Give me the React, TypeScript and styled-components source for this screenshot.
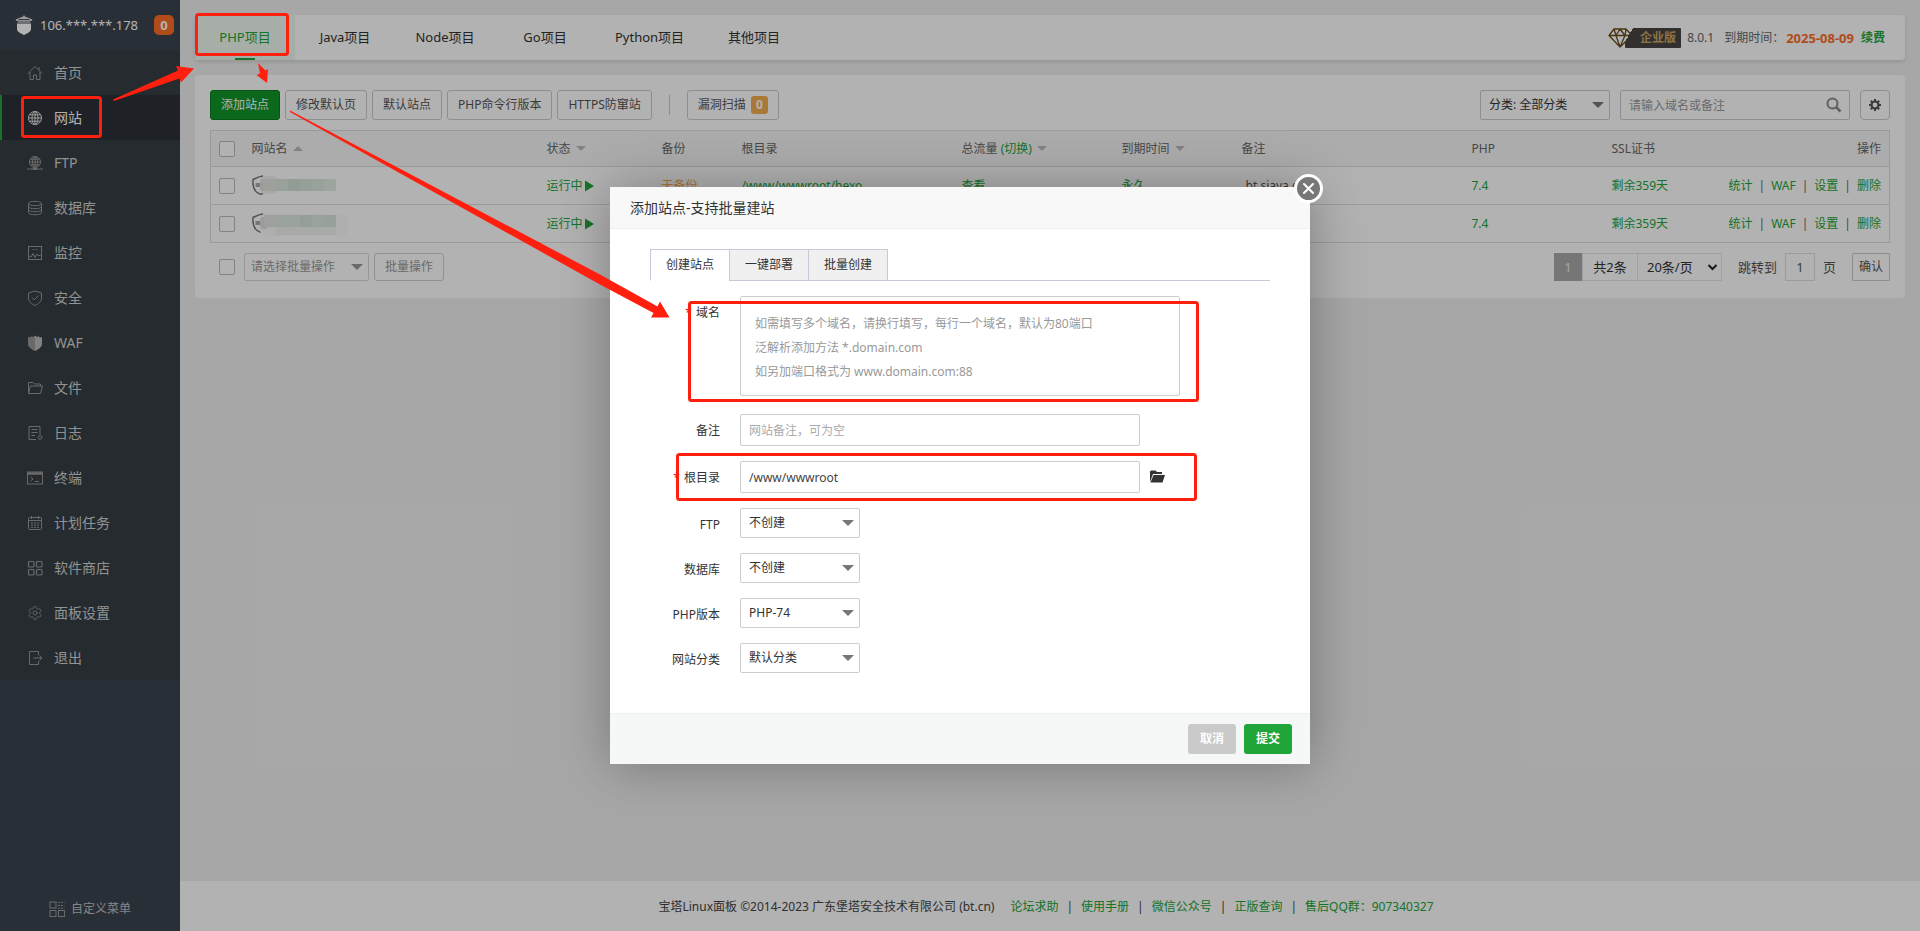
import React from "react";
import styled, { createGlobalStyle, css } from "styled-components";
import { Settings } from "lucide-react";

const GREEN = "#20a53a";

const Global = createGlobalStyle`
  *, *::before, *::after { box-sizing: border-box; }
  body {
    margin: 0;
    background: #f0f0f0;
    color: #333;
    font: 12px/18px "Noto Sans", "Noto Sans CJK SC", sans-serif;
  }
  button, input, select, textarea { font: inherit; color: inherit; margin: 0; }
  h1, h2, p { margin: 0; font: inherit; }
  a { color: ${GREEN}; text-decoration: none; }
`;

/* ---------- page frame ---------- */

const Page = styled.div`
  position: relative;
  display: flex;
  min-height: 100vh;
`;

const Sidebar = styled.aside`
  flex: none;
  display: flex;
  flex-direction: column;
  width: 180px;
  background: #3c444f;
`;

const ServerBar = styled.div`
  display: flex;
  align-items: center;
  height: 50px;
  padding: 0 6px 0 15px;
  color: #fff;
  font-size: 13px;
`;

const ServerName = styled.span`
  flex: 1;
  padding-left: 7px;
`;

const CountBadge = styled.span`
  display: grid;
  place-items: center;
  width: 20px;
  height: 20px;
  border-radius: 5px;
  background: #fc6d26;
  font-weight: 700;
`;

const Menu = styled.nav`
  display: flex;
  flex-direction: column;
  background: #363e42;
`;

const MenuLink = styled.a<{ $active?: boolean }>`
  display: flex;
  align-items: center;
  gap: 11px;
  height: 45px;
  padding-left: 25px;
  border-left: 2px solid ${(p) => (p.$active ? GREEN : "#3c3f41")};
  background: ${(p) => (p.$active ? "#2b3036" : "transparent")};
  color: ${(p) => (p.$active ? "#fff" : "#d2d2d2")};
  font-size: 14px;
  svg { color: ${(p) => (p.$active ? "#e4e4e4" : "#999")}; }
`;

const CustomMenu = styled.a`
  display: flex;
  align-items: center;
  justify-content: center;
  gap: 6px;
  margin-top: auto;
  height: 44px;
  color: #c0c0c0;
  svg { color: #999; }
`;

const Main = styled.div`
  flex: 1;
  min-width: 0;
  display: flex;
  flex-direction: column;
`;

const Content = styled.main`
  flex: 1;
  display: flex;
  flex-direction: column;
  gap: 15px;
  padding: 15px;
`;

const TopBar = styled.div`
  display: flex;
  align-items: center;
  justify-content: space-between;
  height: 45px;
  padding-right: 20px;
  border-radius: 4px;
  background: #fff;
  box-shadow: 0 2px 4px rgba(0, 0, 0, 0.12);
`;

const ProjectTabs = styled.nav`
  display: flex;
`;

const ProjectTab = styled.a<{ $active?: boolean }>`
  position: relative;
  display: flex;
  align-items: center;
  justify-content: center;
  min-width: 100px;
  height: 45px;
  padding: 0 20px 2px;
  font-size: 13px;
  color: ${(p) => (p.$active ? GREEN : "#333")};
  ${(p) =>
    p.$active &&
    css`
      background: #eff9f1;
      &::after {
        content: "";
        position: absolute;
        left: 40px;
        bottom: 0;
        width: 20px;
        height: 2px;
        background: ${GREEN};
      }
    `}
`;

const License = styled.div`
  display: flex;
  align-items: center;
  color: #666;
`;

const EditionTag = styled.span`
  display: flex;
  align-items: center;
  margin-right: 6px;
`;

const EditionName = styled.b`
  height: 20px;
  margin-left: -10px;
  padding: 0 5px 0 15px;
  border-radius: 1px;
  background: linear-gradient(120deg, transparent 7px, #484642 7px);
  color: #c9a566;
  line-height: 20px;
`;

const Expiry = styled.span`
  margin-left: 10px;
`;

const ExpiryDate = styled.b`
  margin: 0 7px 0 2px;
  color: #fc6d26;
  font-size: 13px;
`;

const Card = styled.section`
  padding: 15px 15px 17px;
  border-radius: 4px;
  background: #fff;
`;

const Toolbar = styled.div`
  display: flex;
  align-items: center;
  gap: 5px;
  margin-bottom: 10px;
`;

const ToolButton = styled.button<{ $primary?: boolean }>`
  display: flex;
  align-items: center;
  gap: 5px;
  height: 30px;
  padding: 0 10px;
  border: 1px solid ${(p) => (p.$primary ? "#0b7a20" : "#ccc")};
  border-radius: 3px;
  background: ${(p) => (p.$primary ? "#10952a" : "#fff")};
  color: ${(p) => (p.$primary ? "#fff" : "#555")};
`;

const ScanBadge = styled.span`
  display: grid;
  place-items: center;
  width: 17px;
  height: 18px;
  border-radius: 3px;
  background: #f5ae4f;
  color: #fff;
  font-weight: 700;
`;

const Divider = styled.span`
  width: 1px;
  height: 20px;
  margin: 0 12px;
  background: #ccc;
`;

const Filters = styled.div`
  display: flex;
  gap: 10px;
  margin-left: auto;
`;

const SearchBox = styled.div`
  position: relative;
  svg { position: absolute; right: 8px; top: 7px; color: #8a8a8a; }
`;

const SearchInput = styled.input`
  width: 230px;
  height: 30px;
  padding: 0 30px 0 8px;
  border: 1px solid #ccc;
  border-radius: 2px;
  background: #fff;
  &::placeholder { color: #999; }
`;

const IconButton = styled.button`
  display: grid;
  place-items: center;
  width: 30px;
  height: 30px;
  padding: 0;
  border: 1px solid #ccc;
  border-radius: 4px;
  background: #fff;
  color: #555;
`;

/* ---------- select with a drawn caret ---------- */

const SelectWrap = styled.span<{ $width: number }>`
  position: relative;
  display: inline-flex;
  width: ${(p) => p.$width}px;
`;

const SelectBox = styled.select<{ $height?: number; $muted?: boolean }>`
  appearance: none;
  width: 100%;
  height: ${(p) => p.$height ?? 30}px;
  padding: 0 20px 0 ${(p) => (p.$muted ? 6 : 8)}px;
  border: 1px solid ${(p) => (p.$muted ? "#d8d8d8" : "#ccc")};
  border-radius: 2px;
  background: #fff;
  color: ${(p) => (p.$muted ? "#999" : "#333")};
`;

const Caret = styled.span<{ $muted?: boolean }>`
  position: absolute;
  right: 6px;
  top: 50%;
  margin-top: -3px;
  border: 6px solid transparent;
  border-top-color: ${(p) => (p.$muted ? "#999" : "#777")};
  border-bottom-width: 0;
  pointer-events: none;
`;

type PickProps = {
  label: string;
  text: string;
  width: number;
  height?: number;
  muted?: boolean;
  id?: string;
};

const Pick = ({ label, text, width, height, muted, id }: PickProps) => (
  <SelectWrap $width={width}>
    <SelectBox id={id} aria-label={label} $height={height} $muted={muted}>
      <option>{text}</option>
    </SelectBox>
    <Caret $muted={muted} />
  </SelectWrap>
);

/* ---------- site table ---------- */

const Table = styled.table`
  width: 100%;
  table-layout: fixed;
  border-collapse: collapse;
  border: 1px solid #ddd;
  th, td {
    height: 38px;
    padding: 0 8px;
    border-bottom: 1px solid #ddd;
    text-align: left;
    font-weight: 400;
    white-space: nowrap;
  }
  th { height: 36px; background: #f6f6f6; color: #666; }
  th:last-child, td:last-child { text-align: right; }
`;

const Col = styled.col<{ $w?: number }>`
  width: ${(p) => (p.$w ? `${p.$w}px` : "auto")};
`;

const Check = styled.input`
  appearance: none;
  display: block;
  width: 16px;
  height: 16px;
  border: 1px solid #bbb;
  border-radius: 2px;
  background: #fff;
`;

const Sort = styled.span<{ $up?: boolean }>`
  display: inline-block;
  margin-left: 5px;
  vertical-align: 2px;
  border: 5px solid transparent;
  ${(p) =>
    p.$up
      ? css`border-top-width: 0; border-bottom-color: #bbb;`
      : css`border-bottom-width: 0; border-top-color: #bbb;`}
`;

const SiteName = styled.span`
  display: flex;
  align-items: center;
`;

const Running = styled.a`
  display: flex;
  align-items: center;
  gap: 2px;
`;

const NoBackup = styled.a`
  color: #f5a84a;
`;

const Note = styled.span`
  padding-left: 4px;
  color: #555;
`;

const Actions = styled.span`
  display: flex;
  justify-content: flex-end;
  gap: 6px;
  color: #666;
`;

const TableFoot = styled.div`
  display: flex;
  align-items: center;
  gap: 5px;
  margin-top: 10px;
  padding-left: 9px;
`;

const BatchPick = styled.span`
  display: flex;
  margin-left: 4px;
`;

const BatchButton = styled.button`
  height: 28px;
  padding: 0 10px;
  border: 1px solid #d0d0d0;
  border-radius: 3px;
  background: #fff;
  color: #999;
`;

const Pager = styled.div`
  display: flex;
  align-items: center;
  margin-left: auto;
  color: #555;
  font-size: 13px;
`;

const PageNow = styled.span`
  width: 28px;
  height: 28px;
  background: #aaa;
  color: #eee;
  line-height: 28px;
  text-align: center;
`;

const PageTotal = styled.span`
  width: 56px;
  height: 28px;
  border: 1px solid #e6e6e6;
  color: #333;
  line-height: 26px;
  text-align: center;
`;

const PageSize = styled.span`
  position: relative;
  display: flex;
  width: 85px;
  margin: 0 16px 0 -1px;
  svg { position: absolute; right: 4px; top: 9px; pointer-events: none; color: #222; }
`;

const PageSizeSelect = styled.select`
  appearance: none;
  width: 100%;
  height: 28px;
  padding: 0 16px 0 9px;
  border: 1px solid #e6e6e6;
  border-radius: 0;
  background: #fff;
  color: #333;
`;

const PageInput = styled.input`
  width: 30px;
  height: 28px;
  margin: 0 8px;
  padding: 0;
  border: 1px solid #e0e0e0;
  background: #fff;
  text-align: center;
`;

const ConfirmButton = styled.button`
  width: 38px;
  height: 28px;
  margin-left: 16px;
  padding: 0;
  border: 1px solid #ccc;
  border-radius: 1px;
  background: #fff;
  font-size: 12px;
`;

const Footer = styled.footer`
  display: flex;
  align-items: center;
  justify-content: center;
  height: 50px;
  padding: 2px 8px 0 0;
  background: #fff;
  color: #444;
`;

const FooterLinks = styled.span`
  display: flex;
  gap: 8px;
  margin-left: 16px;
`;

/* ---------- dialog ---------- */

const Shade = styled.div`
  position: absolute;
  inset: 0;
  display: flex;
  align-items: center;
  justify-content: center;
  padding-top: 20px;
  background: rgba(0, 0, 0, 0.3);
`;

const Dialog = styled.section`
  position: relative;
  width: 700px;
  background: #fff;
  box-shadow: 1px 1px 50px rgba(0, 0, 0, 0.3);
`;

const DialogHead = styled.h2`
  height: 42px;
  padding: 0 20px;
  border-bottom: 1px solid #eee;
  background: #f8f8f8;
  font-size: 14px;
  line-height: 41px;
`;

const CloseButton = styled.button`
  position: absolute;
  top: -13px;
  right: -13px;
  display: grid;
  place-items: center;
  width: 29px;
  height: 29px;
  padding: 0;
  border: 3px solid #fff;
  border-radius: 50%;
  background: #777;
  color: #fff;
`;

const DialogBody = styled.div`
  padding: 20px 40px;
`;

const FormTabs = styled.div`
  display: flex;
  height: 32px;
  margin-bottom: 15px;
  border-bottom: 1px solid #c8c8d8;
`;

const FormTab = styled.button<{ $active?: boolean }>`
  width: 80px;
  height: 32px;
  margin-right: -1px;
  padding: 0;
  border: 1px solid #c8c8d8;
  border-bottom-color: ${(p) => (p.$active ? "#fff" : "#c8c8d8")};
  background: ${(p) => (p.$active ? "#fff" : "#f0f0f0")};
`;

const Form = styled.form`
  display: flex;
  flex-direction: column;
  gap: 15px;
  padding-bottom: 20px;
`;

const Field = styled.div<{ $gap?: boolean }>`
  display: flex;
  align-items: flex-start;
  padding-bottom: ${(p) => (p.$gap ? 3 : 0)}px;
`;

const PickField = styled(Field)`
  height: 30px;
`;

const FieldLabel = styled.label`
  flex: none;
  width: 70px;
  margin-right: 20px;
  line-height: 34px;
  text-align: right;
`;

const Required = styled.span`
  margin-right: 4px;
  color: red;
`;

const TextInput = styled.input`
  width: 400px;
  height: 32px;
  padding: 0 8px;
  border: 1px solid #ccc;
  border-radius: 2px;
  color: #444;
  &::placeholder { color: #aaa; }
`;

const DomainInput = styled.textarea`
  width: 440px;
  height: 100px;
  padding: 15px 14px;
  border: 1px solid #ccc;
  border-radius: 2px;
  line-height: 24px;
  resize: none;
  overflow: hidden;
  &::placeholder { color: #999; }
`;

const FolderButton = styled.button`
  display: grid;
  place-items: center;
  height: 32px;
  margin-left: 9px;
  padding: 0;
  border: 0;
  background: none;
`;

const DialogFoot = styled.div`
  display: flex;
  align-items: center;
  justify-content: flex-end;
  gap: 8px;
  height: 51px;
  padding: 0 18px;
  border-top: 1px solid #edf0f0;
  background: #f6f8f8;
`;

const FootButton = styled.button<{ $primary?: boolean }>`
  width: 48px;
  height: 30px;
  padding: 0;
  border: 0;
  border-radius: 3px;
  background: ${(p) => (p.$primary ? GREEN : "#cacaca")};
  color: #fff;
  font-weight: 700;
`;

/* ---------- guide marks over the page ---------- */

const Marks = styled.svg`
  position: absolute;
  left: 0;
  top: 0;
  width: 100%;
  height: 100%;
  pointer-events: none;
`;

/* ---------- drawings ---------- */

const Icon = ({ children }: { children: React.ReactNode }) => (
  <svg width="16" height="16" viewBox="0 0 16 16" fill="none" stroke="currentColor" strokeWidth="1" aria-hidden="true">
    {children}
  </svg>
);

const drawings: Record<string, React.ReactNode> = {
  home: <path d="M1 8.5 8 1.500l7 7M3 7v7.500h3.500V10h3v4.500H13V7M12 2v3" />,
  site: (
    <>
      <circle cx="8" cy="8" r="6.500" />
      <ellipse cx="8" cy="8" rx="3" ry="6.500" />
      <path d="M8 1.500v13M1.500 8h13M2.400 4.800h11.200M2.400 11.200h11.200" />
    </>
  ),
  ftp: (
    <>
      <circle cx="8" cy="7" r="5.500" />
      <ellipse cx="8" cy="7" rx="2.500" ry="5.500" />
      <path d="M8 1.500v11M2.500 7h11M3.500 4.200h9M3.500 9.800h9M0 14h16" />
      <path d="M6 14h4" strokeWidth="2" />
    </>
  ),
  db: (
    <>
      <ellipse cx="8" cy="3.500" rx="6.500" ry="2.200" />
      <path d="M1.500 3.500v9c0 3 13 3 13 0v-9M1.500 6.500c0 3 13 3 13 0M1.500 9.500c0 3 13 3 13 0" />
    </>
  ),
  monitor: (
    <>
      <rect x="1.500" y="1.500" width="13" height="13" />
      <path d="M2.500 11.500h2l1.500-3 2 4 2-3.500 1 1.500h2.500" />
      <path d="M5 4.500h6" opacity="0.5" />
    </>
  ),
  safe: (
    <>
      <path d="M8 1 14.500 3v5c0 3.500-3 6-6.500 7.500C4.500 14 1.500 11.500 1.500 8V3z" />
      <path d="m5 7.500 2.300 2.300L11.500 5.500" />
    </>
  ),
  waf: (
    <g stroke="none" fill="currentColor">
      <path d="M8 0.500 6 2 4.500 1.300 3 2.500 1 2v7c0 3.500 4 5.500 7 7z" />
      <path d="M8 0.500 10 2l1.500-.7L13 2.500 15 2v7c0 3.500-4 5.500-7 7z" fill="#bbb" />
    </g>
  ),
  file: <path d="M1.500 13.500v-11H6L7.500 4h6v2M1.500 13.500 3.500 6h12l-2 7.500z" />,
  log: (
    <>
      <path d="M9 14.500H2v-13h11v8M4.500 4.500h6M4.500 7.500h6M4.500 10.500H8" />
      <circle cx="13" cy="12.500" r="1.800" />
    </>
  ),
  term: (
    <>
      <rect x="0.500" y="2" width="15" height="12" />
      <path d="M1 3.500h14" strokeWidth="2.500" />
      <path d="m3.500 7 2.500 2-2.500 2M8 11.500h4" />
    </>
  ),
  cron: (
    <>
      <rect x="1.500" y="2.500" width="13" height="12" rx="1" />
      <path d="M1.500 5.500h13M4.500 1v3M11.500 1v3" />
      <path d="M4 8h8M4 10.200h8M4 12.400h8" strokeDasharray="2 1" />
    </>
  ),
  store: (
    <g strokeWidth="1.200">
      <rect x="1.500" y="1.500" width="5.500" height="5.500" rx="1" />
      <rect x="9.500" y="1.500" width="5.500" height="5.500" rx="1" />
      <rect x="1.500" y="9.500" width="5.500" height="5.500" rx="1" />
      <rect x="9.500" y="9.500" width="5.500" height="5.500" rx="1" />
    </g>
  ),
  exit: <path d="M11.500 5V1.500h-9v13h9V11M6.500 8h8M12.500 5.500 15 8l-2.500 2.500" />,
  custom: (
    <>
      <rect x="1" y="1" width="6" height="6" />
      <rect x="1" y="9.500" width="6" height="6" />
      <rect x="9.500" y="9.500" width="6" height="6" />
      <path d="M9 1.500h6.500M9 4.500h6.500M9 7.200h6.500" strokeDasharray="2 1" />
    </>
  ),
};

const Logo = () => (
  <svg width="18" height="20" viewBox="0 0 18 20" fill="#ddd" aria-hidden="true">
    <path d="M9 0 10 1.500 17.500 4.500 16.500 6H1.500L.5 4.500 8 1.500z" />
    <path d="M3 6.500h12l1 1.500v6c0 3-4 4.500-7 6-3-1.500-7-3-7-6V8z" fill="#fff" />
    <path d="M2 8h14M3.500 4.600h11" stroke="#3c444f" strokeWidth="1" />
  </svg>
);

const Diamond = () => (
  <svg width="27" height="20" viewBox="0 0 27 20" fill="#fff" stroke="#6b4c1c" strokeWidth="1.300" strokeLinejoin="round" aria-hidden="true">
    <path d="M6 0h13l7 7.500L14 20h-2L0 7.500z" stroke="none" />
    <path d="M6 1h12l6 6.500L12 19 1 7.500zM1 7.500h23M6 1l2 6.500L12 19l5-11.500L18 1M8 7.500 12 1l5 6.500" fill="none" />
  </svg>
);

const SearchGlyph = () => (
  <svg width="16" height="16" viewBox="0 0 16 16" fill="none" stroke="currentColor" strokeWidth="2" aria-hidden="true">
    <circle cx="6.500" cy="6.500" r="5" />
    <path d="m10 10 4.500 4.500" strokeWidth="2.500" />
  </svg>
);

const Gear = () => (
  <svg width="14" height="14" viewBox="0 0 14 14" fill="none" stroke="currentColor" aria-hidden="true">
    <circle cx="7" cy="7" r="3.500" strokeWidth="2.200" />
    <path d="M7 1v2M7 11v2M1 7h2M11 7h2M2.800 2.800l1.400 1.400M9.800 9.800l1.400 1.400M2.800 11.200l1.400-1.400M9.800 4.200l1.400-1.400" strokeWidth="2" />
  </svg>
);

const Folder = () => (
  <svg width="17" height="14" viewBox="0 0 17 14" fill="#333" aria-hidden="true">
    <path d="M1 12V1.500L2 .5h4.500L8 2h5v2H4z" />
    <path d="M4.500 5H16l-2.500 7.500H1.500z" />
  </svg>
);

const mosaics = [
  ["#e2e5e0", "#dae8de", "#cfe0d5", "#d6e6dc", "#d8e8dd", "#e2ece4"],
  ["#e2e5e2", "#dce8e0", "#e0e8e0", "#d4e4da", "#dde8e0", "#d9e6dc"],
];

const MaskedSite = ({ row }: { row: number }) => (
  <svg width="96" height="26" viewBox="0 0 96 26" role="img" aria-label="站点">
    <path d="M11 3C8 3 4.500 5 1 6.500c-.5 6 0 12 7 14.500h3" fill="none" stroke="#777" strokeWidth="1.500" />
    <path d="M3.500 12h6" stroke="#aaa" strokeWidth="4" />
    <rect x="8" y="3" width={row ? 88 : 18} height={row ? 22 : 18} rx="6" fill={row ? "#fafbfa" : "#f0f1f0"} />
    <rect x="8" y="6" width="8" height="12" rx="3" fill="#e0e0e0" />
    {mosaics[row].map((c, i) => (
      <rect key={i} x={12 + i * 12} y={row ? 4 : 6} width="12" height="12" fill={c} />
    ))}
    {row === 1 && <rect x="24" y="16" width="60" height="8" fill="#f0f4f0" />}
  </svg>
);

/* ---------- data ---------- */

const menu = [
  ["home", "首页"],
  ["site", "网站"],
  ["ftp", "FTP"],
  ["db", "数据库"],
  ["monitor", "监控"],
  ["safe", "安全"],
  ["waf", "WAF"],
  ["file", "文件"],
  ["log", "日志"],
  ["term", "终端"],
  ["cron", "计划任务"],
  ["store", "软件商店"],
  ["setting", "面板设置"],
  ["exit", "退出"],
];

const projects = ["PHP项目", "Java项目", "Node项目", "Go项目", "Python项目", "其他项目"];
const tools = ["修改默认页", "默认站点", "PHP命令行版本", "HTTPS防窜站"];
const columns = [33, 295, 115, 80, 220, 160, 120, 230, 140, 140, 0];
const sites = [
  { root: "/www/wwwroot/hexo", note: "bt.sjava.cn" },
  { root: "/www/wwwroot/default", note: "" },
];
const actions = ["统计", "WAF", "设置", "删除"];
const links = ["论坛求助", "使用手册", "微信公众号", "正版查询", "售后QQ群：907340327"];

const picks = [
  { id: "ftp", label: "FTP", text: "不创建" },
  { id: "database", label: "数据库", text: "不创建" },
  { id: "php", label: "PHP版本", text: "PHP-74" },
  { id: "category", label: "网站分类", text: "默认分类" },
];

const joined = (items: string[]) =>
  items.map((t, i) => (
    <React.Fragment key={t}>
      {i > 0 && <span>|</span>}
      <a href="#">{t}</a>
    </React.Fragment>
  ));

/* ---------- sections ---------- */

const SideMenu = () => (
  <Sidebar>
    <ServerBar>
      <Logo />
      <ServerName>106.***.***.178</ServerName>
      <CountBadge>0</CountBadge>
    </ServerBar>
    <Menu>
      {menu.map(([key, text], i) => (
        <MenuLink key={key} href="#" $active={i === 1}>
          {key === "setting" ? <Settings size={16} strokeWidth={1.2} /> : <Icon>{drawings[key]}</Icon>}
          {text}
        </MenuLink>
      ))}
    </Menu>
    <CustomMenu href="#">
      <Icon>{drawings.custom}</Icon>
      自定义菜单
    </CustomMenu>
  </Sidebar>
);

const Header = () => (
  <TopBar>
    <ProjectTabs>
      {projects.map((p, i) => (
        <ProjectTab key={p} href="#" $active={i === 0}>{p}</ProjectTab>
      ))}
    </ProjectTabs>
    <License>
      <EditionTag>
        <Diamond />
        <EditionName>企业版</EditionName>
      </EditionTag>
      8.0.1
      <Expiry>到期时间：</Expiry>
      <ExpiryDate>2025-08-09</ExpiryDate>
      <a href="#"><b>续费</b></a>
    </License>
  </TopBar>
);

const SiteCard = () => (
  <Card>
    <Toolbar>
      <ToolButton $primary>添加站点</ToolButton>
      {tools.map((t) => <ToolButton key={t}>{t}</ToolButton>)}
      <Divider />
      <ToolButton>漏洞扫描<ScanBadge>0</ScanBadge></ToolButton>
      <Filters>
        <Pick label="分类" text="分类: 全部分类" width={130} />
        <SearchBox>
          <SearchInput aria-label="搜索" placeholder="请输入域名或备注" />
          <SearchGlyph />
        </SearchBox>
        <IconButton aria-label="设置"><Gear /></IconButton>
      </Filters>
    </Toolbar>
    <Table>
      <colgroup>{columns.map((w, i) => <Col key={i} $w={w} />)}</colgroup>
      <thead>
        <tr>
          <th><Check type="checkbox" aria-label="全选" /></th>
          <th>网站名<Sort $up /></th>
          <th>状态<Sort /></th>
          <th>备份</th>
          <th>根目录</th>
          <th>总流量 <a href="#">(切换)</a><Sort /></th>
          <th>到期时间<Sort /></th>
          <th>备注</th>
          <th>PHP</th>
          <th>SSL证书</th>
          <th>操作</th>
        </tr>
      </thead>
      <tbody>
        {sites.map((s, i) => (
          <tr key={s.root}>
            <td><Check type="checkbox" aria-label="选择站点" /></td>
            <td><SiteName><MaskedSite row={i} /></SiteName></td>
            <td>
              <Running href="#">
                运行中
                <svg width="9" height="12" viewBox="0 0 9 12" fill={GREEN} aria-hidden="true"><path d="M0 0.500 9 6 0 11.500z" /></svg>
              </Running>
            </td>
            <td><NoBackup href="#">无备份</NoBackup></td>
            <td><a href="#">{s.root}</a></td>
            <td><a href="#">查看</a></td>
            <td><a href="#">永久</a></td>
            <td><Note>{s.note}</Note></td>
            <td><a href="#">7.4</a></td>
            <td><a href="#">剩余359天</a></td>
            <td><Actions>{joined(actions)}</Actions></td>
          </tr>
        ))}
      </tbody>
    </Table>
    <TableFoot>
      <Check type="checkbox" aria-label="批量选择" />
      <BatchPick><Pick label="批量操作" text="请选择批量操作" width={125} height={28} muted /></BatchPick>
      <BatchButton>批量操作</BatchButton>
      <Pager>
        <PageNow>1</PageNow>
        <PageTotal>共2条</PageTotal>
        <PageSize>
          <PageSizeSelect aria-label="每页条数"><option>20条/页</option></PageSizeSelect>
          <svg width="11" height="10" viewBox="0 0 11 10" fill="none" stroke="currentColor" strokeWidth="2" aria-hidden="true"><path d="m1.500 3 4 4 4-4" /></svg>
        </PageSize>
        跳转到
        <PageInput aria-label="页码" defaultValue="1" />
        页
        <ConfirmButton>确认</ConfirmButton>
      </Pager>
    </TableFoot>
  </Card>
);

const AddSiteDialog = () => (
  <Dialog role="dialog" aria-labelledby="dialog-title">
    <DialogHead id="dialog-title">添加站点-支持批量建站</DialogHead>
    <CloseButton aria-label="关闭">
      <svg width="13" height="13" viewBox="0 0 13 13" stroke="currentColor" strokeWidth="2" strokeLinecap="round" aria-hidden="true"><path d="m2 2 9 9M11 2l-9 9" /></svg>
    </CloseButton>
    <DialogBody>
      <FormTabs>
        <FormTab $active>创建站点</FormTab>
        <FormTab>一键部署</FormTab>
        <FormTab>批量创建</FormTab>
      </FormTabs>
      <Form>
        <Field $gap>
          <FieldLabel htmlFor="domain"><Required>*</Required>域名</FieldLabel>
          <DomainInput
            id="domain"
            placeholder={"如需填写多个域名，请换行填写，每行一个域名，默认为80端口\n泛解析添加方法 *.domain.com\n如另加端口格式为 www.domain.com:88"}
          />
        </Field>
        <PlainField>
          <FieldLabel htmlFor="remark">备注</FieldLabel>
          <TextInput id="remark" placeholder="网站备注，可为空" />
        </PlainField>
        <PlainField>
          <FieldLabel htmlFor="root"><Required>*</Required>根目录</FieldLabel>
          <TextInput id="root" defaultValue="/www/wwwroot" />
          <FolderButton type="button" aria-label="选择目录"><Folder /></FolderButton>
        </PlainField>
        {picks.map((p) => (
          <PickField key={p.id}>
            <FieldLabel htmlFor={p.id}>{p.label}</FieldLabel>
            <Pick id={p.id} label={p.label} text={p.text} width={120} />
          </PickField>
        ))}
      </Form>
    </DialogBody>
    <DialogFoot>
      <FootButton>取消</FootButton>
      <FootButton $primary>提交</FootButton>
    </DialogFoot>
  </Dialog>
);

const PlainField = styled(Field)`
  height: 32px;
`;

const GuideMarks = () => (
  <Marks aria-hidden="true">
    <g fill="none" stroke="#ff1f0f" strokeWidth="3">
      <rect x="196.500" y="14.500" width="91" height="40" rx="2" />
      <rect x="22.500" y="97.500" width="78" height="39" rx="2" />
      <rect x="689.500" y="302.500" width="508" height="98" rx="2" />
      <rect x="677.500" y="454.500" width="518" height="45" rx="2" />
    </g>
    <g fill="#ff1f0f">
      <path d="M113 99.500 178 70.500 176 66 194 68.500 181 82.500 179.500 78.500 114 101z" />
      <path d="M258 63 265.500 70.500 268 69 267 83 256.500 75 260 73.500z" />
      <path d="M290 110.500 600 274.500 657.500 306.500 660 301.500 669.500 317.500 651 317.500 653.500 313 600 284.500 290 112z" />
    </g>
  </Marks>
);

export default function App() {
  return (
    <Page>
      <Global />
      <SideMenu />
      <Main>
        <Content>
          <Header />
          <SiteCard />
        </Content>
        <Footer>
          宝塔Linux面板 ©2014-2023 广东堡塔安全技术有限公司 (bt.cn)
          <FooterLinks>{joined(links)}</FooterLinks>
        </Footer>
      </Main>
      <Shade>
        <AddSiteDialog />
      </Shade>
      <GuideMarks />
    </Page>
  );
}
